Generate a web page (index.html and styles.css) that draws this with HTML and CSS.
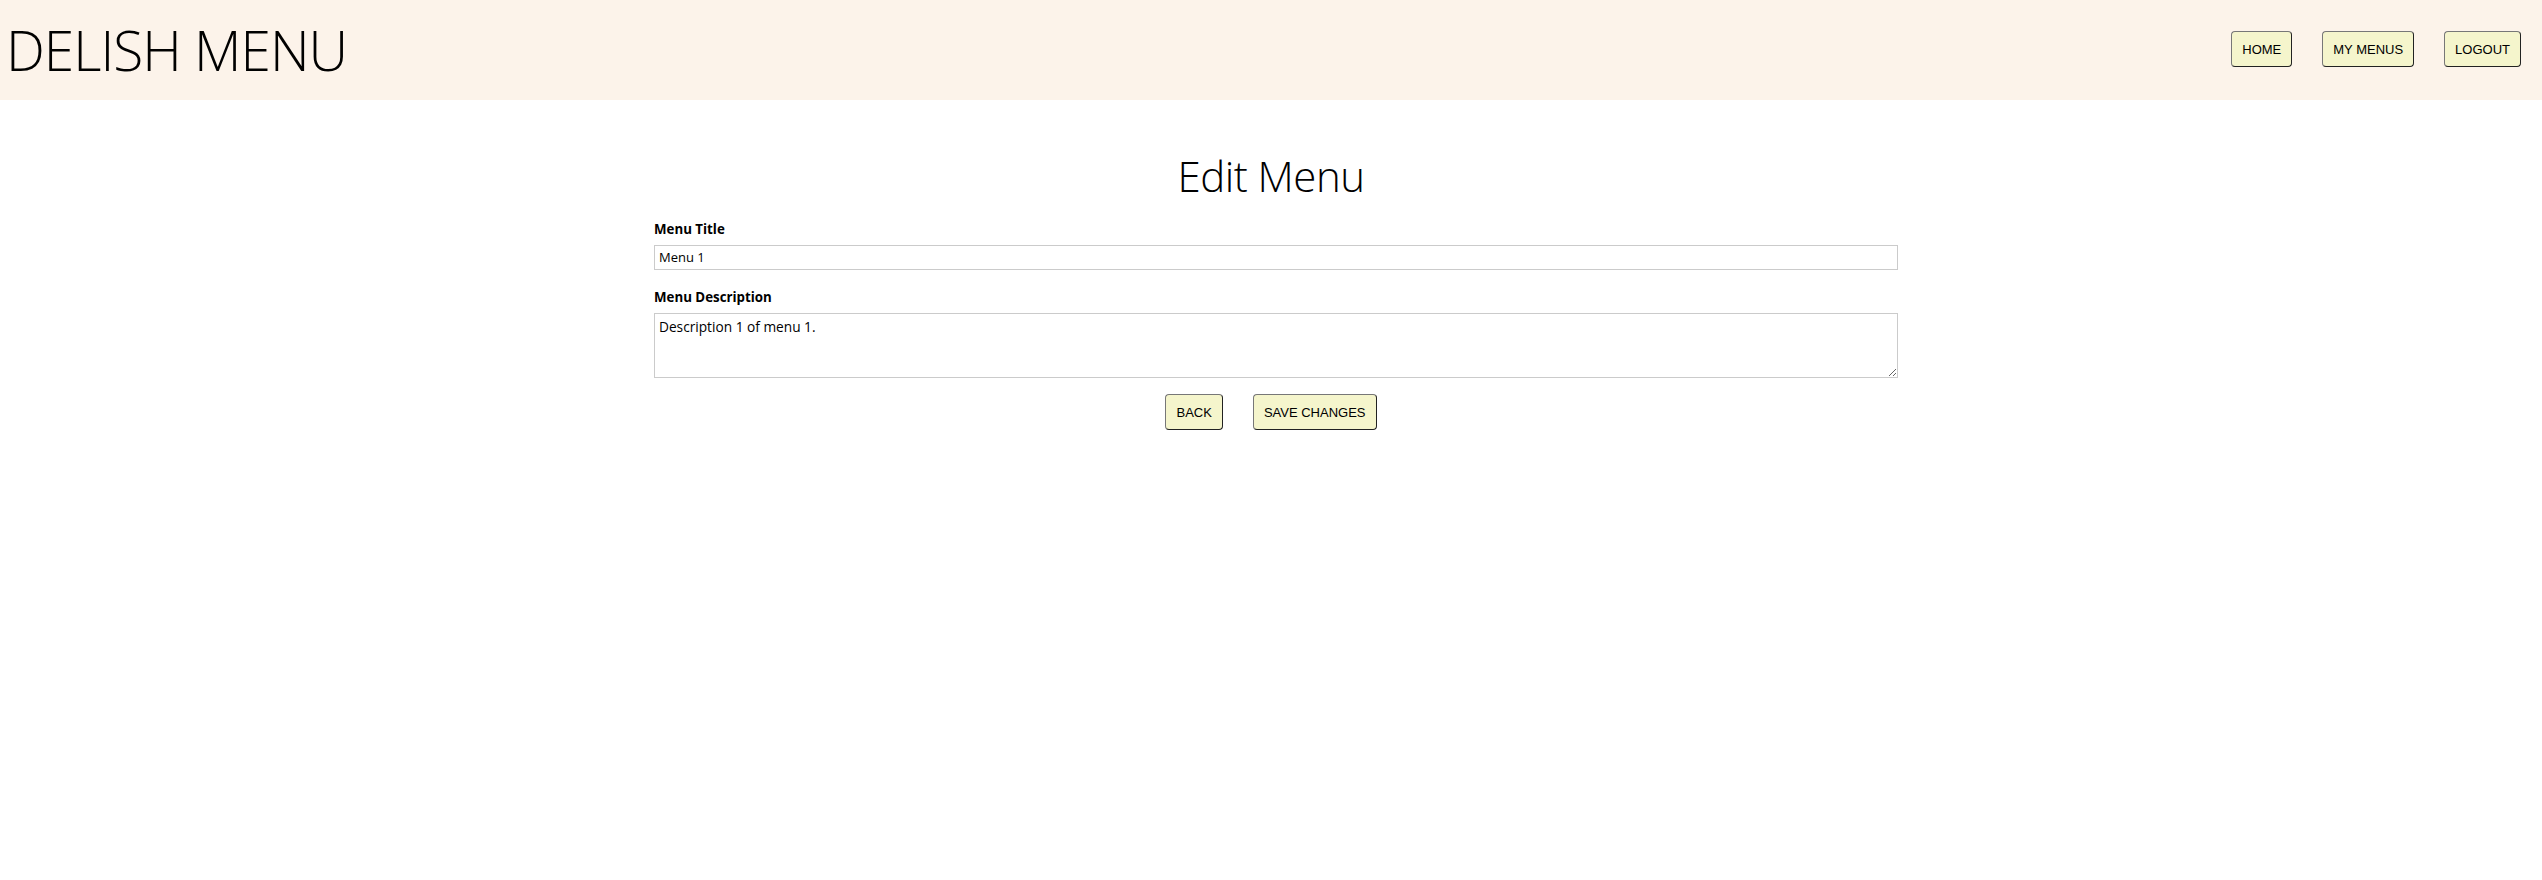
FILE: index.html
```html
<!DOCTYPE html>
<html>
<head>
<meta charset="utf-8">
<title>Delish Menu</title>
<link rel="stylesheet" href="styles.css">
</head>
<body>
<header class="topbar">
  <h1 class="brand">DELISH MENU</h1>
  <nav class="nav">
    <button class="btn">HOME</button>
    <button class="btn">MY MENUS</button>
    <button class="btn">LOGOUT</button>
  </nav>
</header>
<main class="page">
  <h2 class="page-title">Edit Menu</h2>
  <form class="form">
    <label class="label" for="title">Menu Title</label>
    <input class="field" id="title" type="text" value="Menu 1">
    <label class="label" for="desc">Menu Description</label>
    <textarea class="field area" id="desc">Description 1 of menu 1.</textarea>
    <div class="actions">
      <button type="button" class="btn">BACK</button>
      <button type="button" class="btn">SAVE CHANGES</button>
    </div>
  </form>
</main>
</body>
</html>
```
FILE: styles.css
```css
html, body {
  margin: 0;
  padding: 0;
  background: #ffffff;
  font-family: "Open Sans", "Noto Sans", sans-serif;
  color: #000;
}

.topbar {
  height: 100px;
  background: #fcf3ea;
  display: flex;
  align-items: center;
  justify-content: space-between;
  padding: 0 21px 0 6px;
  box-sizing: border-box;
}

.brand {
  margin: 0;
  font-family: "Open Sans", sans-serif;
  font-weight: 300;
  font-size: 55px;
  letter-spacing: -1px;
  line-height: 1;
  padding-bottom: 2px;
}

.nav {
  display: flex;
  gap: 30px;
  align-items: center;
  padding-bottom: 2px;
}

.btn {
  height: 36px;
  padding: 0 10px;
  background: #f5f5cc;
  border: 1px solid;
  border-color: #777 #222 #222 #777;
  border-radius: 4px;
  font-family: "Liberation Sans", Arial, sans-serif;
  font-size: 13px;
  color: #000;
  cursor: pointer;
}

.page {
  width: 1234px;
  margin: 0 auto;
}

.page-title {
  margin: 55px 0 5px;
  font-weight: 300;
  font-size: 42px;
  line-height: 1;
  text-align: center;
  letter-spacing: -0.5px;
}

.form {
  display: flex;
  flex-direction: column;
  align-items: flex-start;
}

.label {
  font-weight: 700;
  font-size: 13.3px;
  line-height: 18px;
  margin-top: 18px;
  margin-bottom: 7px;
}

.field {
  width: 100%;
  box-sizing: content-box;
  padding: 3px 4px;
  border: 1px solid #cbcbcb;
  font-family: "Open Sans", sans-serif;
  font-size: 13px;
  line-height: 17px;
  margin: 0;
  color: #000;
  outline: none;
}

.area {
  height: 57px;
  padding-top: 4px;
  padding-bottom: 2px;
  font-size: 13.7px;
  resize: vertical;
}

.actions {
  align-self: stretch;
  display: flex;
  justify-content: center;
  gap: 30px;
  margin-top: 16px;
}
```
